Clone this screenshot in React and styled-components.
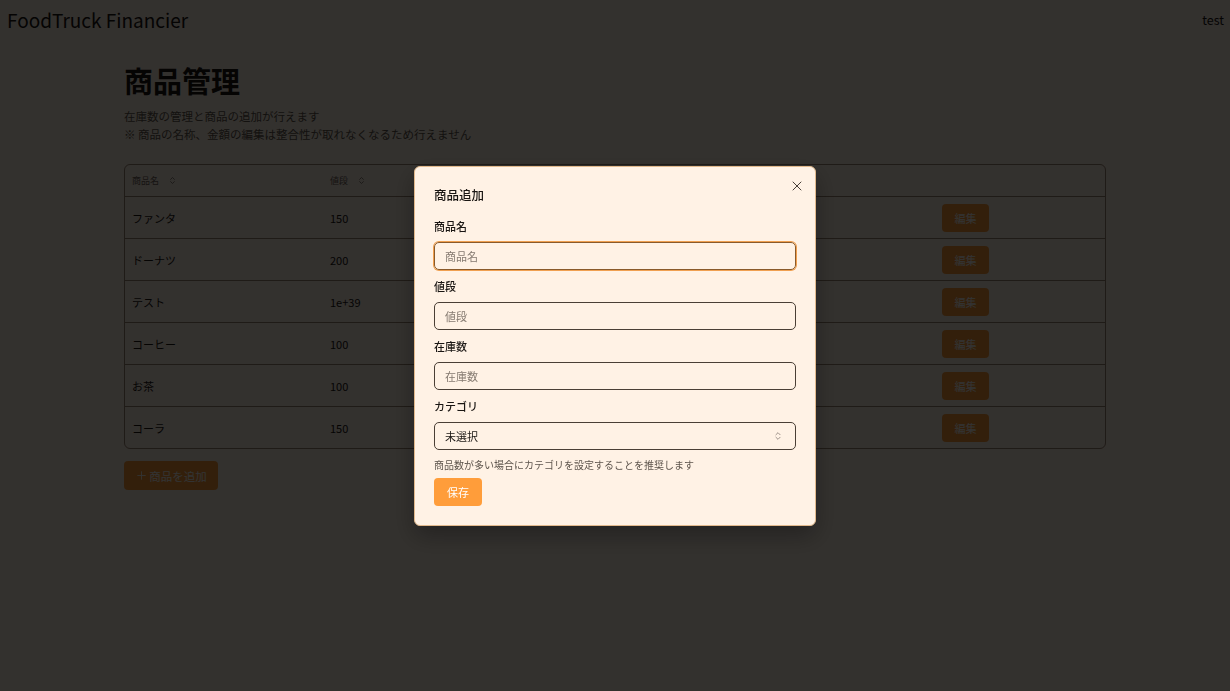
import React from 'react';
import styled, { createGlobalStyle } from 'styled-components';
import { ChevronsUpDown, X, Plus } from 'lucide-react';

const GlobalStyle = createGlobalStyle`
  body {
    margin: 0;
    background-color: #fff2e5;
    font-family: "Noto Sans CJK JP", "Noto Sans", sans-serif;
    color: #1a1613;
  }
`;

const Header = styled.header`
  height: 38px;
  display: flex;
  align-items: center;
  justify-content: space-between;
  padding: 0 6px 0 7px;
`;

const Logo = styled.div`
  font-size: 19px;
  line-height: 1;
`;

const UserName = styled.div`
  font-size: 12.5px;
`;

const Main = styled.main`
  width: 982px;
  margin: 0 0 0 124px;
`;

const Title = styled.h1`
  margin: 22px 0 7px;
  font-size: 29px;
  line-height: 40px;
  font-weight: 700;
`;

const Note = styled.p`
  margin: 0;
  font-size: 11.5px;
  line-height: 18px;
  color: #5e554d;
`;

const Table = styled.div`
  margin-top: 21px;
  border: 1px solid #9c8672;
  border-radius: 6px;
  overflow: hidden;
`;

const Row = styled.div`
  display: grid;
  grid-template-columns: 198px 198px 198px 198px 1fr;
  align-items: center;
  height: ${(p) => (p.$head ? '31px' : '42px')};
  border-top: ${(p) => (p.$head ? 'none' : '1px solid #9c8672')};
  box-sizing: border-box;
`;

const Cell = styled.div`
  padding-left: ${(p) => p.$pad || '7px'};
  font-size: ${(p) => (p.$head ? '9px' : '11px')};
  color: ${(p) => (p.$head ? '#6f655c' : '#1a1613')};
  display: flex;
  align-items: center;
  gap: 9px;
`;

const EditButton = styled.button`
  width: 47px;
  height: 28px;
  border: none;
  border-radius: 4px;
  background-color: #ff9d3a;
  color: #fff;
  font-family: inherit;
  font-size: 11px;
  padding: 0;
`;

const AddButton = styled.button`
  margin-top: 12px;
  width: 94px;
  height: 29px;
  border: none;
  border-radius: 4px;
  background-color: #ff9d3a;
  color: #fff;
  font-family: inherit;
  font-size: 11.5px;
  display: flex;
  align-items: center;
  justify-content: center;
  gap: 1px;
  padding: 0;
`;

const Overlay = styled.div`
  position: fixed;
  inset: 0;
  background-color: rgba(0, 0, 0, 0.8);
  display: flex;
  align-items: center;
  justify-content: center;
`;

const Modal = styled.div`
  position: relative;
  width: 402px;
  box-sizing: border-box;
  padding: 19px 19px 19px;
  background-color: #fff2e5;
  border: 1px solid #e2b98c;
  border-radius: 6px;
  box-shadow: 0 10px 25px rgba(0, 0, 0, 0.3);
  display: flex;
  flex-direction: column;
`;

const CloseButton = styled.button`
  position: absolute;
  top: 11px;
  right: 10px;
  border: none;
  background: none;
  padding: 0;
  color: #3a322b;
  display: flex;
`;

const ModalTitle = styled.h2`
  margin: 0 0 13px;
  font-size: 12.5px;
  line-height: 18px;
  font-weight: 500;
`;

const Field = styled.div`
  display: flex;
  flex-direction: column;
  gap: 7px;
  margin-bottom: 7px;
`;

const Label = styled.label`
  font-size: 11px;
  line-height: 18px;
  font-weight: 500;
`;

const Input = styled.input`
  height: 28px;
  box-sizing: border-box;
  border: 1px solid ${(p) => (p.$focus ? '#8a5a2a' : '#4a3f35')};
  box-shadow: ${(p) => (p.$focus ? '0 0 0 1px #f0a050' : 'none')};
  border-radius: 5px;
  background: transparent;
  padding: 0 10px;
  font-family: inherit;
  font-size: 11px;
  outline: none;
  &::placeholder {
    color: #857a70;
  }
`;

const Select = styled.div`
  height: 28px;
  box-sizing: border-box;
  border: 1px solid #4a3f35;
  border-radius: 5px;
  padding: 0 12px 0 10px;
  font-size: 11px;
  display: flex;
  align-items: center;
  justify-content: space-between;
  color: #1a1613;
`;

const Help = styled.p`
  margin: 0 0 5px;
  font-size: 10px;
  line-height: 16px;
  color: #5e554d;
`;

const SaveButton = styled.button`
  align-self: flex-start;
  width: 48px;
  height: 28px;
  border: none;
  border-radius: 4px;
  background-color: #ff9d3a;
  color: #fff;
  font-family: inherit;
  font-size: 11px;
  padding: 0;
`;

const products = [
  { name: 'ファンタ', price: '150' },
  { name: 'ドーナツ', price: '200' },
  { name: 'テスト', price: '1e+39' },
  { name: 'コーヒー', price: '100' },
  { name: 'お茶', price: '100' },
  { name: 'コーラ', price: '150' },
];

const App = () => {
  return (
    <>
      <GlobalStyle />
      <Header>
        <Logo>FoodTruck Financier</Logo>
        <UserName>test</UserName>
      </Header>
      <Main>
        <Title>商品管理</Title>
        <Note>在庫数の管理と商品の追加が行えます</Note>
        <Note>※ 商品の名称、金額の編集は整合性が取れなくなるため行えません</Note>
        <Table>
          <Row $head>
            <Cell $head>商品名 <ChevronsUpDown size={9} /></Cell>
            <Cell $head>値段 <ChevronsUpDown size={9} /></Cell>
            <Cell $head>在庫数 <ChevronsUpDown size={9} /></Cell>
            <Cell $head>カテゴリ</Cell>
            <Cell $head />
          </Row>
          {products.map((p) => (
            <Row key={p.name}>
              <Cell>{p.name}</Cell>
              <Cell>{p.price}</Cell>
              <Cell>10</Cell>
              <Cell>-</Cell>
              <Cell $pad="25px">
                <EditButton>編集</EditButton>
              </Cell>
            </Row>
          ))}
        </Table>
        <AddButton>
          <Plus size={13} strokeWidth={1.6} />
          商品を追加
        </AddButton>
      </Main>
      <Overlay>
        <Modal>
          <CloseButton>
            <X size={16} strokeWidth={1.4} />
          </CloseButton>
          <ModalTitle>商品追加</ModalTitle>
          <Field>
            <Label>商品名</Label>
            <Input $focus placeholder="商品名" />
          </Field>
          <Field>
            <Label>値段</Label>
            <Input placeholder="値段" />
          </Field>
          <Field>
            <Label>在庫数</Label>
            <Input placeholder="在庫数" />
          </Field>
          <Field>
            <Label>カテゴリ</Label>
            <Select>
              未選択
              <ChevronsUpDown size={10} color="#8a8078" />
            </Select>
          </Field>
          <Help>商品数が多い場合にカテゴリを設定することを推奨します</Help>
          <SaveButton>保存</SaveButton>
        </Modal>
      </Overlay>
    </>
  );
};

export default App;
